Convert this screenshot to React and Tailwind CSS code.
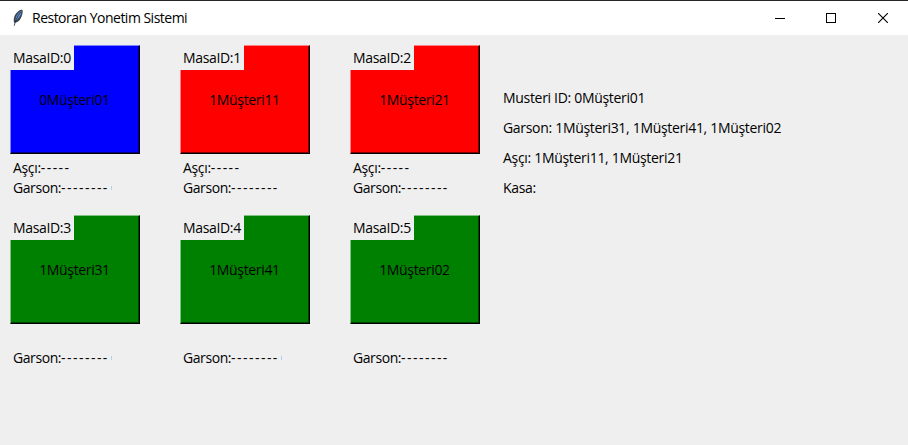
const TABLES = [
  { id: 0, color: "bg-[#0000ff]", light: "border-t-[#8080ff] border-l-[#8080ff]", shade: "border-[#000080]", customer: "0Müşteri01", cook: true, tick: "h-1 bg-[#a9d3e8]" },
  { id: 1, color: "bg-[#ff0000]", light: "border-t-[#ff8080] border-l-[#ff8080]", shade: "border-[#800000]", customer: "1Müşteri11", cook: true },
  { id: 2, color: "bg-[#ff0000]", light: "border-t-[#ff8080] border-l-[#ff8080]", shade: "border-[#800000]", customer: "1Müşteri21", cook: true },
  { id: 3, color: "bg-[#008000]", light: "border-t-[#80c080] border-l-[#80c080]", shade: "border-[#004000]", customer: "1Müşteri31", cook: false, tick: "h-1 bg-[#a9d3e8]" },
  { id: 4, color: "bg-[#008000]", light: "border-t-[#80c080] border-l-[#80c080]", shade: "border-[#004000]", customer: "1Müşteri41", cook: false, tick: "h-1 bg-[#a9d3e8]" },
  { id: 5, color: "bg-[#008000]", light: "border-t-[#80c080] border-l-[#80c080]", shade: "border-[#004000]", customer: "1Müşteri02", cook: false },
];

function Feather() {
  return (
    <svg width="14" height="18" viewBox="0 0 14 18">
      <path d="M3.2 13.8C1.9 10.5 3.2 5.4 7 2.4C8.8 .9 11 .2 11.6 1.3C12.2 3.5 11 7 9.7 9.4C8.3 12 6 13.2 4.6 13.8Z" fill="#3c4652" />
      <path d="M4.6 11.5C4.2 7.6 6.6 4 10.4 1.9C10.8 5.2 8.2 9 4.6 11.5Z" fill="#5f93d6" />
      <path d="M3.2 16.8C4.2 12 6.2 7.4 9.8 3" fill="none" stroke="#222b36" strokeWidth=".8" />
    </svg>
  );
}

function TitleBar() {
  return (
    <header className="flex h-[35px] items-center border-t border-[#252525] bg-white">
      <div className="ml-[11px] w-[21px]"><Feather /></div>
      <h1 className="text-[14px] leading-5 tracking-[-0.51px]">Restoran Yonetim Sistemi</h1>
      <div className="ml-auto flex h-full items-center">
        <button className="flex h-full w-[51px] items-center justify-center" aria-label="Minimize">
          <svg width="10" height="11" shapeRendering="crispEdges"><path d="M0 5h10v1H0z" /></svg>
        </button>
        <button className="flex h-full w-[52px] items-center justify-center" aria-label="Maximize">
          <svg width="10" height="10"><rect x=".5" y=".5" width="9" height="9" fill="none" stroke="#000" /></svg>
        </button>
        <button className="flex h-full w-[51px] items-center justify-center" aria-label="Close">
          <svg width="10" height="10"><path d="M0 0L10 10M10 0L0 10" stroke="#000" strokeWidth="1.1" /></svg>
        </button>
      </div>
    </header>
  );
}

function Table({ table }) {
  return (
    <section className="h-[170px] w-[130px]">
      <div className="grid h-[109px]">
        <button className={`col-start-1 row-start-1 border-r border-b border-r-black border-b-black border-t border-l ${table.light} ${table.color}`}>
          <span className={`flex h-full items-center justify-center border-r border-b pt-0.5 ${table.shade}`}>
            <span className="leading-5">{table.customer}</span>
          </span>
        </button>
        <div className="z-10 col-start-1 row-start-1 flex h-[25px] w-16 items-center bg-[#efefef] pl-[3px] leading-5 whitespace-nowrap">
          MasaID:{table.id}
        </div>
      </div>
      <div className="mt-1 h-5 pl-[3px] leading-5">
        {table.cook && <>Aşçı:<span className="tracking-[1.45px]">-----</span></>}
      </div>
      <div className="flex h-5 items-center pl-[3px] leading-5 whitespace-nowrap">
        <span className="tracking-[-0.42px]">Garson:</span><span className="tracking-[1.46px]">--------</span>
        {table.tick && <i className={`ml-0.5 w-px ${table.tick}`} />}
      </div>
    </section>
  );
}

export default function App() {
  return (
    <div className="h-[445px] w-[908px] overflow-hidden bg-[#efefef] font-['Open_Sans','Noto_Sans',sans-serif] text-[14px] tracking-[-0.34px] text-black">
      <TitleBar />
      <main className="flex pt-[10px] pl-[10px]">
        <div className="grid grid-cols-[130px_130px_130px] gap-x-10">
          {TABLES.map((t) => <Table key={t.id} table={t} />)}
        </div>
        <aside className="mt-[38px] ml-[23px] flex flex-col leading-[30px] tracking-[-0.31px] whitespace-nowrap">
          <p>Musteri ID: 0Müşteri01</p>
          <p>Garson: 1Müşteri31, 1Müşteri41, 1Müşteri02</p>
          <p>Aşçı: 1Müşteri11, 1Müşteri21</p>
          <p>Kasa:</p>
        </aside>
      </main>
    </div>
  );
}
